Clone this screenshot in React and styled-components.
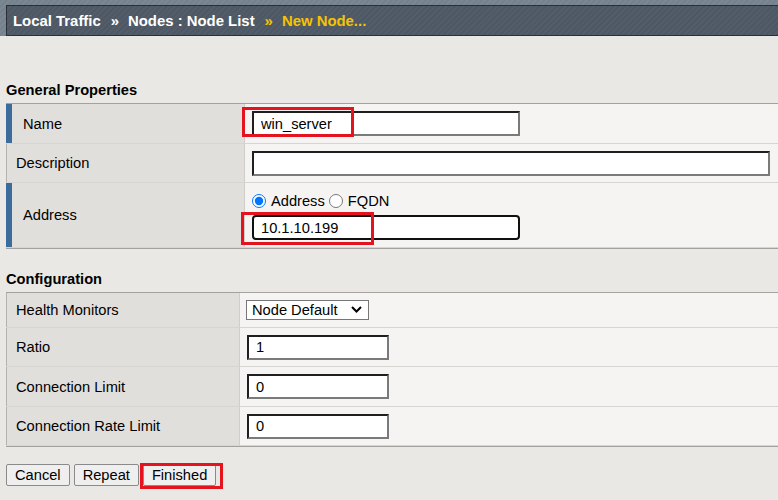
import React from "react";
import styled, { createGlobalStyle, css } from "styled-components";

const GlobalStyle = createGlobalStyle`
  html, body { margin: 0; padding: 0; }
  body {
    background: #e9e8e4;
    font-family: "Liberation Sans", Arial, sans-serif;
    font-size: 14.67px;
    color: #000;
  }
  * { box-sizing: border-box; }
`;

const Page = styled.div`
  width: 778px;
  height: 500px;
  overflow: hidden;
  background: #e9e8e4;
`;

const TopBar = styled.div`
  height: 36px;
  padding: 5px 0 0 6px;
  background: repeating-linear-gradient(135deg, #75828e 0 2px, #7b8894 2px 4px);
`;

const Crumbs = styled.div`
  height: 31px;
  border: 1px solid #2b3036;
  border-right: none;
  background: repeating-linear-gradient(135deg, #4d5864 0 2px, #525d69 2px 4px);
  display: flex;
  align-items: center;
  padding-left: 6px;
  font-weight: bold;
  font-size: 14.9px;
  color: #fff;
  white-space: pre;
`;

const Crumb = styled.span`
  color: ${(p) => (p.$current ? "#f6c300" : "#ffffff")};
`;

const Sep = styled.span`
  padding: 0 9px 0 10px;
  color: ${(p) => (p.$current ? "#f6c300" : "#ffffff")};
`;

const SectionTitle = styled.div`
  padding-left: 6px;
  font-weight: bold;
  line-height: 17px;
  margin: ${(p) => p.$top}px 0 4px;
`;

const Table = styled.div`
  margin-left: 6px;
  border-top: 1px solid #a3a29e;
  border-bottom: 1px solid #a3a29e;
`;

const Row = styled.div`
  display: grid;
  grid-template-columns: ${(p) => p.$label}px 1fr;
  height: ${(p) => p.$h}px;
  border-bottom: 1px solid #d7d5d1;
`;

const Label = styled.div`
  display: flex;
  align-items: center;
  background: #e0dfdb;
  border-left: ${(p) => (p.$marked ? "6px solid #3b6c9c" : "1px solid #b4b2ae")};
  border-right: 1px solid #d0ceca;
  padding-left: ${(p) => (p.$marked ? 11 : 9)}px;
`;

const Value = styled.div`
  display: flex;
  flex-direction: column;
  justify-content: center;
  align-items: flex-start;
  gap: 5px;
  background: #f5f4f2;
  padding-left: ${(p) => p.$pad}px;
`;

const TextInput = styled.input`
  width: ${(p) => p.$w}px;
  height: 25px;
  font-family: inherit;
  font-size: 14.67px;
  padding: 1px 7px;
  border-style: solid;
  border-width: 2px;
  border-color: #1f1f1f #7a7a7a #7a7a7a #1f1f1f;
  border-radius: 0;
  background: #fff;
  color: #000;
  outline: none;
  ${(p) =>
    p.$focused &&
    css`
      border-color: #101010;
      border-radius: 4px;
    `}
`;

const Marked = styled.span`
  position: relative;
  display: inline-flex;
`;

const RedBox = styled.span`
  position: absolute;
  left: ${(p) => p.$l}px;
  top: ${(p) => p.$t}px;
  width: ${(p) => p.$w}px;
  height: ${(p) => p.$h}px;
  border: 3px solid #e5131d;
  pointer-events: none;
`;

const RadioLine = styled.div`
  display: flex;
  align-items: center;
  line-height: 18px;
  padding-top: 2px;
`;

const RadioOption = styled.label`
  display: inline-flex;
  align-items: center;
  margin-right: 4px;
`;

const Radio = styled.input.attrs({ type: "radio" })`
  margin: 0 5px 0 0;
  width: 14px;
  height: 14px;
  accent-color: #0075ff;
`;

const SelectWrap = styled.span`
  position: relative;
  display: inline-flex;
`;

const Select = styled.select`
  appearance: none;
  width: 123px;
  height: 20px;
  border: 1px solid #767676;
  border-radius: 0;
  background: #fff;
  font-family: inherit;
  font-size: 14.67px;
  padding: 0 0 0 5px;
  color: #000;
`;

const Chevron = styled.svg`
  position: absolute;
  right: 7px;
  top: 6px;
  pointer-events: none;
`;

const Actions = styled.div`
  display: flex;
  gap: 4px;
  padding: 17px 0 0 6px;
`;

const Button = styled.button`
  height: 22px;
  padding: 0 8px;
  font-family: inherit;
  font-size: 14.67px;
  background: #efefef;
  border: 1px solid #8a8a8a;
  border-radius: 2px;
  color: #000;
`;

export default function App() {
  return (
    <Page>
      <GlobalStyle />
      <TopBar>
        <Crumbs>
          <Crumb>Local Traffic</Crumb>
          <Sep>»</Sep>
          <Crumb>Nodes : Node List</Crumb>
          <Sep $current>»</Sep>
          <Crumb $current>New Node...</Crumb>
        </Crumbs>
      </TopBar>

      <SectionTitle $top={46}>General Properties</SectionTitle>
      <Table>
        <Row $label={239} $h={40}>
          <Label $marked>Name</Label>
          <Value $pad={7}>
            <Marked>
              <TextInput $w={268} defaultValue="win_server" />
              <RedBox $l={-10} $t={-4} $w={112} $h={30} />
            </Marked>
          </Value>
        </Row>
        <Row $label={239} $h={39}>
          <Label>Description</Label>
          <Value $pad={7}>
            <TextInput $w={518} defaultValue="" />
          </Value>
        </Row>
        <Row $label={239} $h={65}>
          <Label $marked>Address</Label>
          <Value $pad={7}>
            <RadioLine>
              <RadioOption>
                <Radio name="addrType" defaultChecked />
                Address
              </RadioOption>
              <RadioOption>
                <Radio name="addrType" />
                FQDN
              </RadioOption>
            </RadioLine>
            <Marked>
              <TextInput $w={268} $focused defaultValue="10.1.10.199" />
              <RedBox $l={-11} $t={-3} $w={133} $h={33} />
            </Marked>
          </Value>
        </Row>
      </Table>

      <SectionTitle $top={22}>Configuration</SectionTitle>
      <Table>
        <Row $label={234} $h={35}>
          <Label>Health Monitors</Label>
          <Value $pad={6}>
            <SelectWrap>
              <Select defaultValue="default">
                <option value="default">Node Default</option>
              </Select>
              <Chevron width="11" height="7" viewBox="0 0 11 7">
                <path d="M1 1 L5.5 5.5 L10 1" fill="none" stroke="#000" strokeWidth="2" />
              </Chevron>
            </SelectWrap>
          </Value>
        </Row>
        <Row $label={234} $h={39}>
          <Label>Ratio</Label>
          <Value $pad={7}>
            <TextInput $w={142} defaultValue="1" />
          </Value>
        </Row>
        <Row $label={234} $h={40}>
          <Label>Connection Limit</Label>
          <Value $pad={7}>
            <TextInput $w={142} defaultValue="0" />
          </Value>
        </Row>
        <Row $label={234} $h={39}>
          <Label>Connection Rate Limit</Label>
          <Value $pad={7}>
            <TextInput $w={142} defaultValue="0" />
          </Value>
        </Row>
      </Table>

      <Actions>
        <Button>Cancel</Button>
        <Button>Repeat</Button>
        <Marked>
          <Button>Finished</Button>
          <RedBox $l={-3} $t={-1} $w={83} $h={26} />
        </Marked>
      </Actions>
    </Page>
  );
}
